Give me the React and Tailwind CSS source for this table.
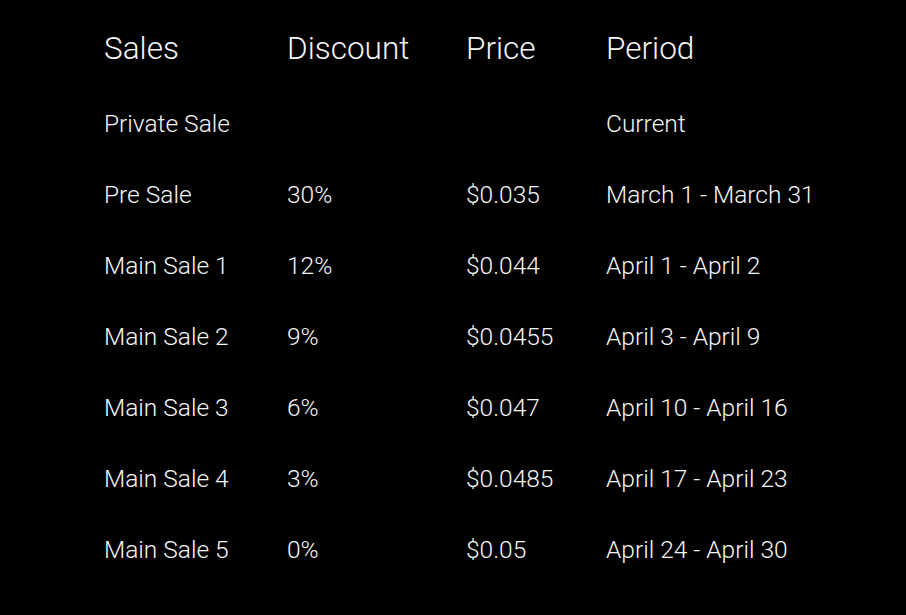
const rows = [
  { sale: "Private Sale", discount: "", price: "", period: "Current" },
  { sale: "Pre Sale", discount: "30%", price: "$0.035", period: "March 1 - March 31" },
  { sale: "Main Sale 1", discount: "12%", price: "$0.044", period: "April 1 - April 2" },
  { sale: "Main Sale 2", discount: "9%", price: "$0.0455", period: "April 3 - April 9" },
  { sale: "Main Sale 3", discount: "6%", price: "$0.047", period: "April 10 - April 16" },
  { sale: "Main Sale 4", discount: "3%", price: "$0.0485", period: "April 17 - April 23" },
  { sale: "Main Sale 5", discount: "0%", price: "$0.05", period: "April 24 - April 30" },
];

export default function App() {
  return (
    <div
      className="w-[906px] h-[615px] bg-black text-[#f5f5f5] font-light pl-[104px] pt-[13px]"
      style={{ fontFamily: "Roboto, 'Liberation Sans', sans-serif" }}
    >
      {/* Header */}
      <div className="grid grid-cols-[183px_179px_140px_1fr] h-[72px] leading-[72px] text-[31.5px] mb-[3px]">
        <div>Sales</div>
        <div>Discount</div>
        <div>Price</div>
        <div>Period</div>
      </div>

      {/* Rows */}
      {rows.map((row, index) => (
        <div
          key={index}
          className="grid grid-cols-[183px_179px_140px_1fr] h-[71px] leading-[71px] text-[24.5px]"
        >
          <div>{row.sale}</div>
          <div>{row.discount}</div>
          <div>{row.price}</div>
          <div>{row.period}</div>
        </div>
      ))}
    </div>
  );
}
